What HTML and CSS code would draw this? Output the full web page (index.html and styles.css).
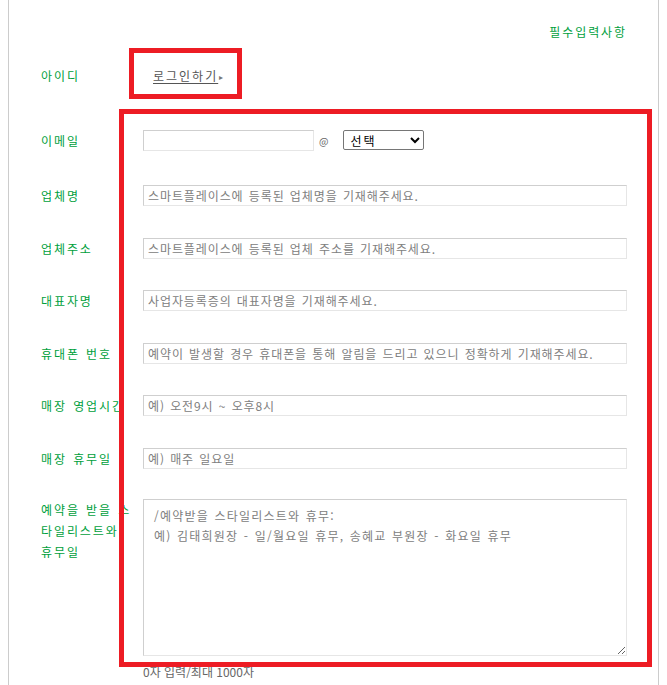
FILE: index.html
```html
<!DOCTYPE html>
<html lang="ko">
<head>
  <meta charset="UTF-8">
  <title>업체 정보 입력</title>
  <link rel="stylesheet" href="styles.css">
</head>
<body>

  <div class="wrap">
    <p class="required">필수입력사항</p>

    <div class="row row-id">
      <span class="label">아이디</span>
      <a href="#" class="login">로그인하기</a>
      <span class="arrow">&#9656;</span>
    </div>

    <div class="row row-email">
      <label class="label" for="email">이메일</label>
      <input type="text" id="email" class="email">
      <span class="at">@</span>
      <select class="domain">
        <option>선택</option>
        <option>naver.com</option>
        <option>gmail.com</option>
      </select>
    </div>

    <div class="row">
      <label class="label" for="shop">업체명</label>
      <input type="text" id="shop" placeholder="스마트플레이스에 등록된 업체명을 기재해주세요.">
    </div>

    <div class="row">
      <label class="label" for="addr">업체주소</label>
      <input type="text" id="addr" placeholder="스마트플레이스에 등록된 업체 주소를 기재해주세요.">
    </div>

    <div class="row">
      <label class="label" for="owner">대표자명</label>
      <input type="text" id="owner" placeholder="사업자등록증의 대표자명을 기재해주세요.">
    </div>

    <div class="row">
      <label class="label" for="phone">휴대폰 번호</label>
      <input type="text" id="phone" placeholder="예약이 발생할 경우 휴대폰을 통해 알림을 드리고 있으니 정확하게 기재해주세요.">
    </div>

    <div class="row">
      <label class="label" for="hours">매장 영업시간</label>
      <input type="text" id="hours" placeholder="예) 오전9시 ~ 오후8시">
    </div>

    <div class="row">
      <label class="label" for="holiday">매장 휴무일</label>
      <input type="text" id="holiday" placeholder="예) 매주 일요일">
    </div>

    <div class="row row-text">
      <label class="label" for="stylist">예약을 받을 스<br>타일리스트와<br>휴무일</label>
      <textarea id="stylist" placeholder="/예약받을 스타일리스트와 휴무:&#10;예) 김태희원장 - 일/월요일 휴무, 송혜교 부원장 - 화요일 휴무"></textarea>
    </div>

    <p class="counter">0자 입력/최대 1000자</p>

    <!-- annotation boxes -->
    <span class="mark mark-login"></span>
    <span class="mark mark-fields"></span>
  </div>

</body>
</html>
```

FILE: styles.css
```css
* {
  box-sizing: border-box;
  margin: 0;
  padding: 0;
}

body {
  margin: 0 8px;
  background: #fff;
  font-family: "Noto Sans CJK KR", "Noto Sans", sans-serif;
  font-size: 12px;
  color: #555;
  letter-spacing: 1.9px;
  word-spacing: 1px;
}

.wrap {
  position: relative;
  min-height: 685px;
  border-left: 1px solid #ccc;
  border-right: 1px solid #ccc;
  padding: 24px 31px 0 32px;
}

.required {
  text-align: right;
  line-height: 16px;
  color: #00a03c;
}

.row {
  display: flex;
  align-items: flex-start;
  height: 52.5px;
  padding-top: 16px;
}

.label {
  flex: 0 0 102px;
  width: 102px;
  padding-right: 12px;
  line-height: 21px;
  color: #00a03c;
  white-space: nowrap;
}

.row-id {
  height: 70px;
  padding-top: 0;
  align-items: center;
}

.row-id .label {
  padding-top: 1px;
}

.login {
  margin-left: 10px;
  color: #555;
  text-decoration: underline;
  text-underline-offset: 2px;
  line-height: 16px;
  padding-top: 2px;
  letter-spacing: 2px;
}

.arrow {
  margin-left: 1px;
  font-size: 8px;
  color: #777;
  padding-top: 3px;
}

.row-email {
  height: 59px;
  padding-top: 20px;
}

input[type="text"] {
  flex: 1;
  height: 21px;
  border: 1px solid;
  border-color: #cfcfcf #e6e6e6 #e6e6e6 #cfcfcf;
  padding: 0 4px;
  font-family: inherit;
  font-size: 12px;
  letter-spacing: 0.9px;
  word-spacing: 1px;
  color: #333;
  outline: none;
}

input::placeholder,
textarea::placeholder {
  color: #808080;
}

.email {
  flex: 0 0 171px !important;
  width: 171px;
}

.at {
  margin-left: 5px;
  line-height: 21px;
  font-size: 10px;
  letter-spacing: 0;
  color: #666;
}

.domain {
  margin-left: 15px;
  width: 81px;
  height: 20px;
  padding: 0 2px;
  font-family: "Noto Sans CJK KR", sans-serif;
  font-size: 12px;
  letter-spacing: 2px;
  color: #000;
  border: 1px solid #767676;
  border-radius: 2px;
  background: #fff;
  outline: none;
}

.row-text {
  height: auto;
  padding-top: 15px;
}

.row-text .label {
  white-space: nowrap;
  overflow: visible;
}

textarea {
  flex: 1;
  height: 157px;
  border: 1px solid;
  border-color: #cfcfcf #e6e6e6 #e6e6e6 #cfcfcf;
  padding: 6px 10px;
  font-family: inherit;
  font-size: 12px;
  letter-spacing: 1.2px;
  word-spacing: 1px;
  line-height: 20px;
  color: #333;
  outline: none;
}

.counter {
  margin-top: 8px;
  margin-left: 102px;
  line-height: 16px;
  color: #666;
  letter-spacing: 0;
  word-spacing: 0;
}

.mark {
  position: absolute;
  border: 5px solid #ed1c24;
  pointer-events: none;
}

.mark-login {
  left: 120px;
  top: 48px;
  width: 113px;
  height: 51px;
}

.mark-fields {
  left: 110px;
  top: 109px;
  width: 533px;
  height: 558px;
}
```
